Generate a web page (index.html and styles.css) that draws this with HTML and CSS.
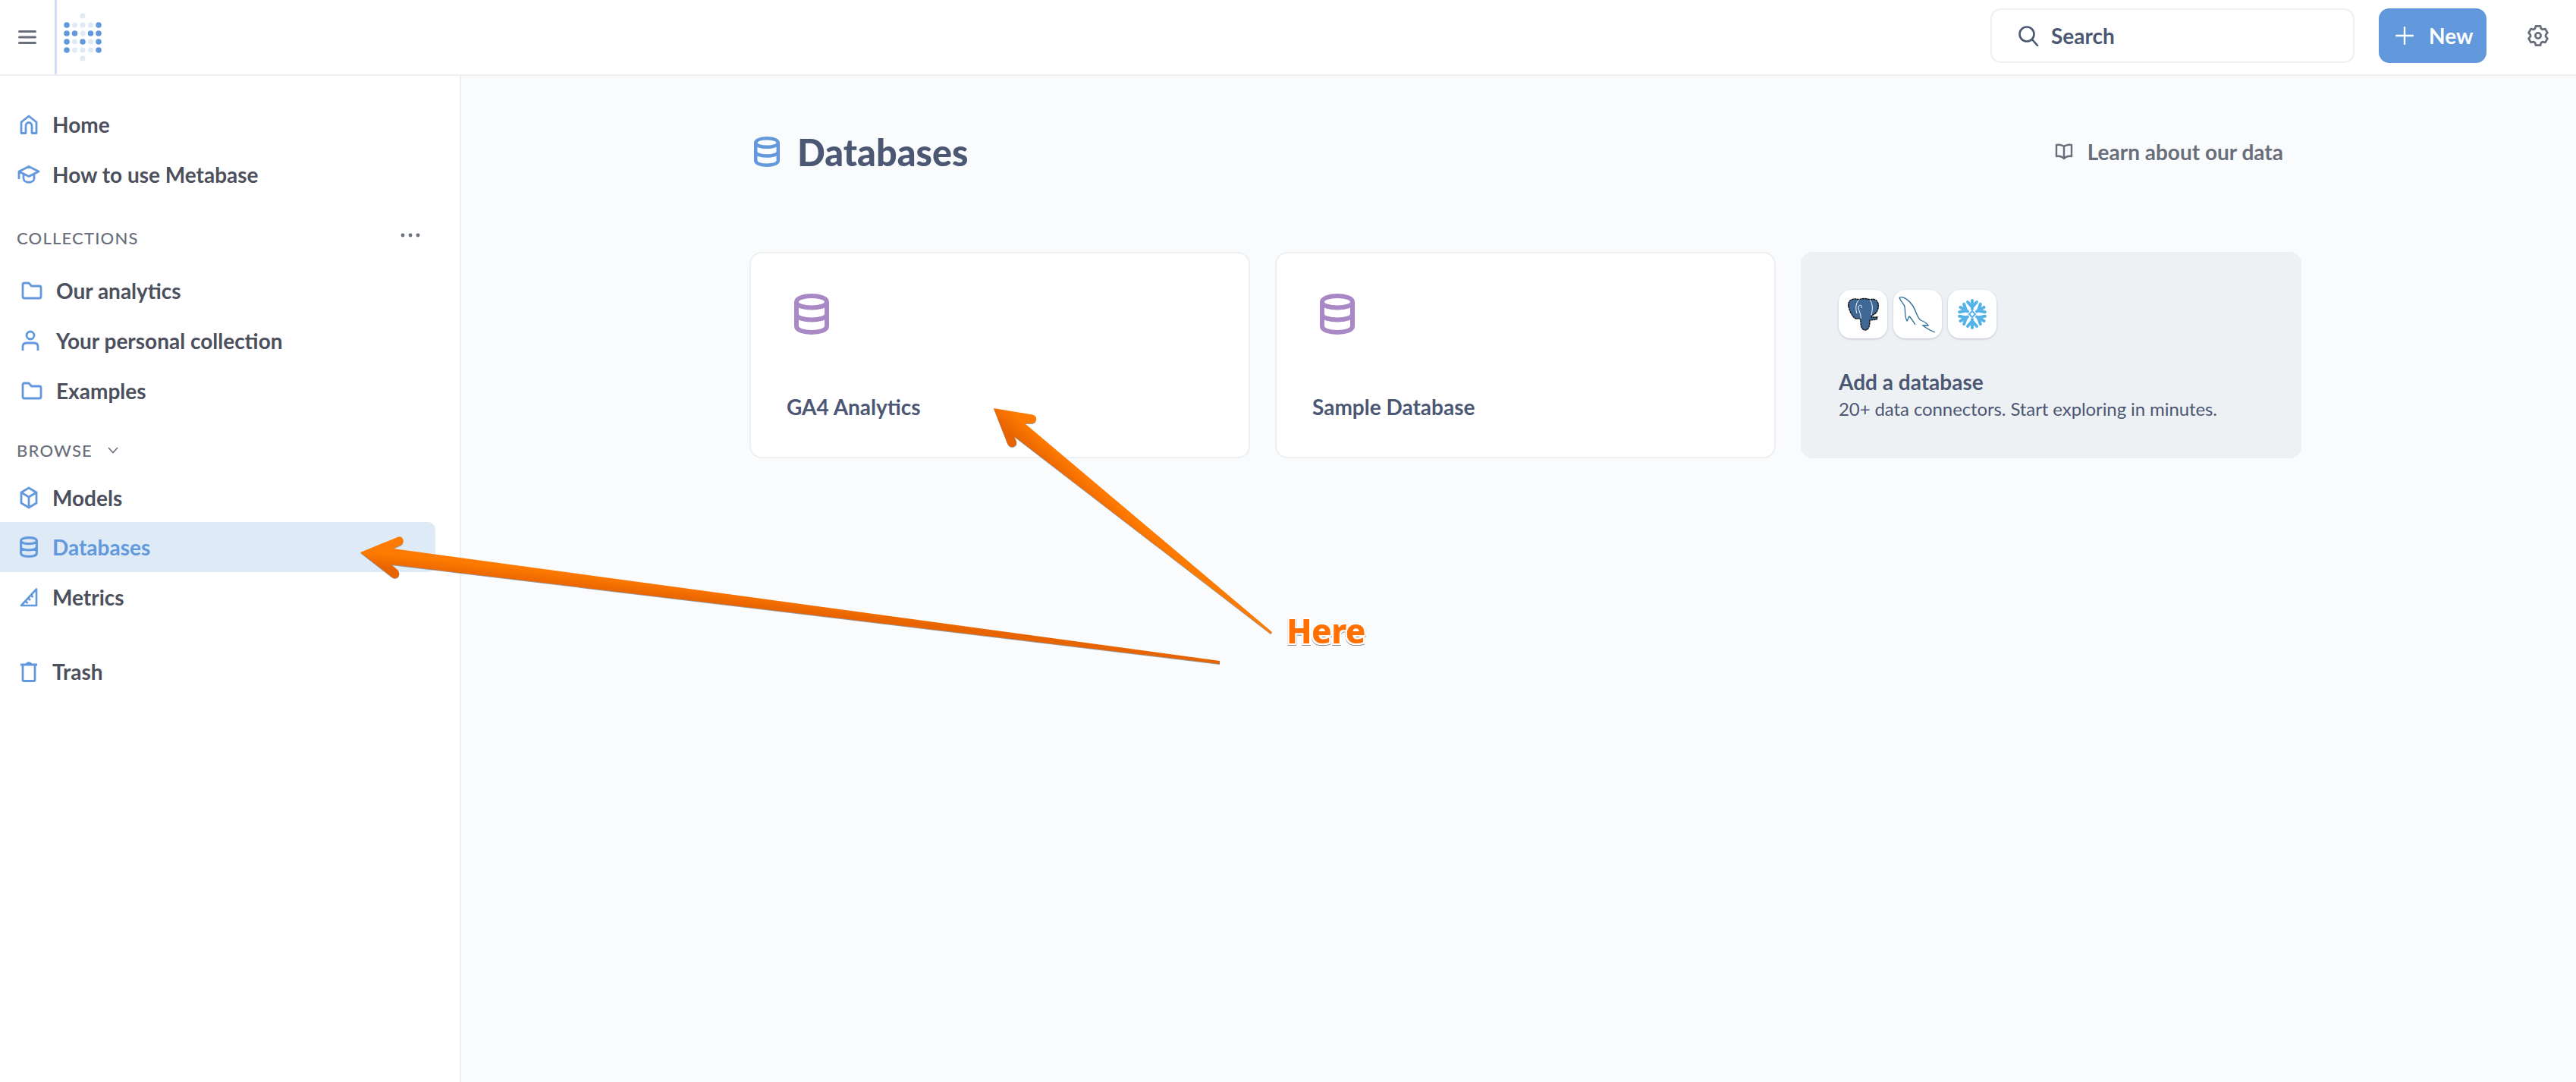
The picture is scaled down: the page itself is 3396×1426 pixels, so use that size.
FILE: index.html
```html
<!DOCTYPE html>
<html lang="en">
<head>
  <meta charset="UTF-8">
  <title>Databases</title>
  <link rel="stylesheet" href="styles.css">
</head>
<body>
  <svg class="sprite" width="0" height="0">
    <symbol id="i-db" viewBox="0.5 0.5 23 27">
      <path d="M2 6 C2 .7 22 .7 22 6 V22 C22 27.3 2 27.3 2 22 Z M2 6 C2 11 22 11 22 6 M2 14 C2 19 22 19 22 14" fill="none" stroke="currentColor" stroke-width="3" stroke-linejoin="round"/>
    </symbol>
    <symbol id="i-folder" viewBox="0 0 28 24">
      <path d="M2 4 Q2 2 4 2 H10 L13.5 6 H24 Q26 6 26 8 V20 Q26 22 24 22 H4 Q2 22 2 20 Z" fill="none" stroke="currentColor" stroke-width="2.8" stroke-linejoin="round"/>
    </symbol>
    <symbol id="i-flake-arm" viewBox="0 0 64 64">
      <path d="M32 25 V14 M26 16 L32 23 L38 16" fill="none" stroke="#56b3e8" stroke-width="4" stroke-linecap="round" stroke-linejoin="round"/>
    </symbol>
  </svg>

  <header class="topbar">
    <div class="topbar-left">
      <button class="menu-btn" aria-label="Menu">
        <svg width="24" height="20" viewBox="0 0 24 20"><path d="M1.5 2.5 H22.5 M1.5 10 H22.5 M1.5 17.5 H22.5" stroke="#696e7b" stroke-width="3" stroke-linecap="round"/></svg>
      </button>
      <svg class="logo" width="50" height="64" viewBox="0 0 50 64">
        <g fill="#dfeaf6">
          <circle cx="25" cy="4" r="3.5"/><circle cx="14.5" cy="16" r="3.5"/><circle cx="25" cy="16" r="3.5"/><circle cx="35.5" cy="16" r="3.5"/>
          <circle cx="25" cy="27" r="3.5"/><circle cx="14.5" cy="38" r="3.5"/><circle cx="35.5" cy="38" r="3.5"/><circle cx="14.5" cy="49" r="3.5"/>
          <circle cx="25" cy="49" r="3.5"/><circle cx="35.5" cy="49" r="3.5"/><circle cx="25" cy="60" r="3.5"/>
        </g>
        <g fill="#6298dc">
          <circle cx="4" cy="16" r="3.8"/><circle cx="46" cy="16" r="3.8"/><circle cx="4" cy="27" r="3.8"/><circle cx="14.5" cy="27" r="3.8"/>
          <circle cx="35.5" cy="27" r="3.8"/><circle cx="46" cy="27" r="3.8"/><circle cx="4" cy="38" r="3.8"/><circle cx="25" cy="38" r="3.8"/>
          <circle cx="46" cy="38" r="3.8"/><circle cx="4" cy="49" r="3.8"/><circle cx="46" cy="49" r="3.8"/>
        </g>
      </svg>
    </div>
    <div class="topbar-right">
      <div class="search">
        <svg width="28" height="28" viewBox="0 0 28 28"><circle cx="12" cy="12" r="9.5" fill="none" stroke="#4c5773" stroke-width="2.6"/><path d="M19 19 L26 27" stroke="#4c5773" stroke-width="2.6" stroke-linecap="round"/></svg>
        <span>Search</span>
      </div>
      <button class="new-btn">
        <svg width="24" height="24" viewBox="0 0 24 24"><path d="M12 1 V23 M1 12 H23" stroke="#fff" stroke-width="2.4" stroke-linecap="round"/></svg>
        New
      </button>
      <svg class="gear" width="28" height="28" viewBox="0 0 28 28">
        <path d="M11.1 1.3 H16.9 L18.2 4.9 L19.7 5.8 L23.5 5.1 L26.4 10.2 L24 13.1 V14.9 L26.4 17.8 L23.5 22.9 L19.7 22.2 L18.2 23.1 L16.9 26.7 H11.1 L9.8 23.1 L8.3 22.2 L4.5 22.9 L1.6 17.8 L4 14.9 V13.1 L1.6 10.2 L4.5 5.1 L8.3 5.8 L9.8 4.9 Z" fill="none" stroke="#696e7b" stroke-width="2.8" stroke-linejoin="round"/>
        <circle cx="14" cy="14" r="3.6" fill="none" stroke="#696e7b" stroke-width="2.8"/>
      </svg>
    </div>
  </header>

  <div class="layout">
    <aside class="sidebar">
      <a class="nav-item">
        <span class="nav-icon"><svg width="24" height="26" viewBox="0 0 24 26"><path d="M2 24.5 V10 L12 2 L22 10 V24.5 H16 V14.5 A4 4 0 0 0 8 14.5 V24.5 Z" fill="none" stroke="currentColor" stroke-width="2.8" stroke-linejoin="round"/></svg></span>
        Home
      </a>
      <a class="nav-item">
        <span class="nav-icon"><svg class="cap-icon" width="30" height="24" viewBox="0 0 30 24"><path d="M15 1.5 L28 8 L15 14.5 L2 8 Z M8 12 V17 C8 24 22 24 22 17 V12 M2 8 V18" fill="none" stroke="currentColor" stroke-width="2.8" stroke-linejoin="round"/></svg></span>
        How to use Metabase
      </a>

      <div class="nav-heading heading-collections">
        <span>COLLECTIONS</span>
        <svg class="more" width="26" height="6" viewBox="0 0 26 6"><circle cx="3" cy="3" r="2.4"/><circle cx="13" cy="3" r="2.4"/><circle cx="23" cy="3" r="2.4"/></svg>
      </div>
      <a class="nav-item nav-item-sub">
        <span class="nav-icon"><svg width="28" height="24"><use href="#i-folder"/></svg></span>
        Our analytics
      </a>
      <a class="nav-item nav-item-sub">
        <span class="nav-icon"><svg width="24" height="28" viewBox="0 0 24 28"><circle cx="12" cy="7" r="5" fill="none" stroke="currentColor" stroke-width="2.8"/><path d="M2 27 V22 Q2 17 7 17 H17 Q22 17 22 22 V27" fill="none" stroke="currentColor" stroke-width="2.8"/></svg></span>
        Your personal collection
      </a>
      <a class="nav-item nav-item-sub">
        <span class="nav-icon"><svg width="28" height="24"><use href="#i-folder"/></svg></span>
        Examples
      </a>

      <div class="nav-heading heading-browse">
        <span>BROWSE</span>
        <svg width="14" height="9" viewBox="0 0 14 9"><path d="M1 1 L7 7.5 L13 1" fill="none" stroke="#696e7b" stroke-width="1.6"/></svg>
      </div>
      <a class="nav-item">
        <span class="nav-icon"><svg width="24" height="30" viewBox="0 0 24 30"><path d="M12 2 L22 8 V22 L12 28 L2 22 V8 Z M2 8 L12 14 L22 8 M12 14 V28" fill="none" stroke="currentColor" stroke-width="2.8" stroke-linejoin="round"/></svg></span>
        Models
      </a>
      <a class="nav-item nav-item-active">
        <span class="nav-icon"><svg width="24" height="28"><use href="#i-db"/></svg></span>
        Databases
      </a>
      <a class="nav-item">
        <span class="nav-icon"><svg width="24" height="26" viewBox="0 0 24 26"><path d="M22 2.5 V24 H2 Z M11 14 L14 17 M14.5 10 L17.5 13 M7.5 18 L10.5 21" fill="none" stroke="currentColor" stroke-width="2.6" stroke-linejoin="round"/></svg></span>
        Metrics
      </a>
      <a class="nav-item nav-item-trash">
        <span class="nav-icon"><svg width="24" height="28" viewBox="0 0 24 28"><path d="M1 5 H23 M8.5 4.5 Q12 1 15.5 4.5 M4 5 V25 Q4 26.5 5.5 26.5 H18.5 Q20 26.5 20 25 V5" fill="none" stroke="currentColor" stroke-width="2.8"/></svg></span>
        Trash
      </a>
    </aside>

    <main class="content">
      <div class="page-head">
        <h1 class="page-title">
          <svg class="title-icon" width="34" height="40"><use href="#i-db"/></svg>
          Databases
        </h1>
        <a class="learn-link">
          <svg width="24" height="22" viewBox="0 0 24 22"><path d="M12 4 C9 1.5 5 1.5 2 2 V17 C5 16.5 9 16.5 12 20 C15 16.5 19 16.5 22 17 V2 C19 1.5 15 1.5 12 4 Z M12 4 V19" fill="none" stroke="#696e7b" stroke-width="2.4" stroke-linejoin="round"/></svg>
          Learn about our data
        </a>
      </div>

      <div class="card-grid">
        <div class="card">
          <svg class="card-icon" width="46" height="54"><use href="#i-db"/></svg>
          <div class="card-name">GA4 Analytics</div>
        </div>
        <div class="card">
          <svg class="card-icon" width="46" height="54"><use href="#i-db"/></svg>
          <div class="card-name">Sample Database</div>
        </div>
        <div class="card card-add">
          <div class="logo-row">
            <div class="logo-tile">
              <svg width="64" height="64" viewBox="0 0 64 64">
                <path d="M13 22 C11 14 19 10 27 13 C30 11 38 11 41 13 C48 10 54 16 52 24 C51 29 48 32 45 33 L43 36 L51 36 L50 39 L41 40 C41 46 40 53 35 53 C30 53 29 47 29 42 L28 37 C22 40 19 36 17 32 C15 29 14 26 13 22 Z" fill="#3f6896" stroke="#111" stroke-width="1.4" stroke-dasharray="3 .6"/>
                <path d="M27 13 C22 17 22 26 24 31 M41 13 C45 18 45 26 43 33 M30 24 C32 20 28 19 26 22 C26 28 30 32 29 38" fill="none" stroke="#fff" stroke-width="1"/>
              </svg>
            </div>
            <div class="logo-tile">
              <svg width="64" height="64" viewBox="0 0 64 64">
                <path d="M8 10 C13 8 20 13 25 20 C30 27 31 36 36 40 C41 42 45 45 46 47 L39 47 C43 50 47 53 55 56 M8 10 C9 15 14 18 15 22 C16 30 15 36 18 41 C20 38 20 36 21 35 C24 38 26 41 29 46" fill="none" stroke="#2a6a94" stroke-width="1.3"/>
              </svg>
            </div>
            <div class="logo-tile">
              <svg width="64" height="64" viewBox="0 0 64 64">
                <use href="#i-flake-arm"/>
                <use href="#i-flake-arm" transform="rotate(60 32 32)"/>
                <use href="#i-flake-arm" transform="rotate(120 32 32)"/>
                <use href="#i-flake-arm" transform="rotate(180 32 32)"/>
                <use href="#i-flake-arm" transform="rotate(240 32 32)"/>
                <use href="#i-flake-arm" transform="rotate(300 32 32)"/>
                <path d="M32 28 L36 32 L32 36 L28 32 Z" fill="none" stroke="#56b3e8" stroke-width="2"/>
              </svg>
            </div>
          </div>
          <div class="add-title">Add a database</div>
          <div class="add-text">20+ data connectors. Start exploring in minutes.</div>
        </div>
      </div>
    </main>
  </div>

  <!-- annotations drawn over the screenshot -->
  <svg class="annotations" width="3396" height="1426" viewBox="0 0 3396 1426">
    <defs>
      <linearGradient id="arrow-fill" gradientUnits="userSpaceOnUse" x1="1336" y1="575" x2="1351" y2="558">
        <stop offset="0" stop-color="#e86400"/>
        <stop offset="1" stop-color="#ff7a00"/>
      </linearGradient>
      <linearGradient id="arrow-fill-2" gradientUnits="userSpaceOnUse" x1="1062" y1="807" x2="1064" y2="788">
        <stop offset="0" stop-color="#e86400"/>
        <stop offset="1" stop-color="#ff7a00"/>
      </linearGradient>
    </defs>
    <path class="arrow" fill="url(#arrow-fill)" d="M1310 538 L1361 546.5 Q1367 548 1366 553 Q1365 558 1359 558 L1351 558 L1677 833 L1675 835 L1337 575 L1340 582 Q1341 588 1335 589 Q1330 589 1328 584 Z"/>
    <path class="arrow" fill="url(#arrow-fill-2)" d="M475 728 L524 708 Q529 706 531 710 Q533 715 529 718 L518 723 L1608 871 L1608 875 L516 744 L524 751 Q528 755 525 760 Q521 764 516 760 Z"/>
  </svg>
  <div class="here-label">Here</div>
</body>
</html>
```

FILE: styles.css
```css
* {
  box-sizing: border-box;
}

html, body {
  height: 100%;
}

body {
  margin: 0;
  font-family: Lato, "Open Sans", sans-serif;
  color: #4c5773;
  background: #f9fbfc;
  overflow: hidden;
  position: relative;
}

.sprite {
  position: absolute;
}

/* top bar */
.topbar {
  height: 100px;
  background: #fff;
  border-bottom: 2px solid #eeeff1;
  display: flex;
  justify-content: space-between;
  align-items: center;
}

.topbar-left {
  display: flex;
  align-items: center;
  height: 98px;
}

.menu-btn {
  width: 75px;
  height: 98px;
  padding: 0 0 0 24px;
  display: flex;
  align-items: center;
  background: none;
  border: none;
  border-right: 3px solid #cfe0f4;
}

.logo {
  margin-left: 9px;
}

.topbar-right {
  display: flex;
  align-items: center;
  padding: 0 36px 4px 0;
}

.search {
  width: 480px;
  height: 72px;
  display: flex;
  align-items: center;
  gap: 16px;
  padding-left: 34px;
  background: #fff;
  border: 2px solid #eeeff1;
  border-radius: 14px;
  font-size: 28px;
  font-weight: 700;
}

.new-btn {
  width: 142px;
  height: 72px;
  margin-left: 32px;
  display: flex;
  align-items: center;
  gap: 20px;
  padding: 0 0 0 22px;
  color: #fff;
  background: #6298dc;
  border: none;
  border-radius: 14px;
  font-family: inherit;
  font-size: 28px;
  font-weight: 700;
}

.gear {
  margin-left: 54px;
}

/* sidebar */
.layout {
  display: flex;
  height: calc(100% - 100px);
}

.sidebar {
  width: 608px;
  flex: none;
  padding: 31px 32px 0 0;
  background: #fff;
  border-right: 2px solid #eeeff1;
}

.nav-item {
  height: 66px;
  display: flex;
  align-items: center;
  padding-left: 26px;
  color: #4c4f5c;
  font-size: 28px;
  font-weight: 700;
}

.nav-icon {
  width: 43px;
  display: flex;
  align-items: center;
  color: #6298dc;
}

.cap-icon {
  margin-left: -3px;
}

.nav-item-sub {
  padding-left: 28px;
}

.nav-item-sub .nav-icon {
  width: 46px;
}

.nav-item-active {
  margin-top: -1px;
  color: #6298dc;
  background: #deeaf6;
  border-radius: 0 10px 10px 0;
}

.nav-item-trash {
  margin-top: 32px;
}

.nav-heading {
  display: flex;
  align-items: center;
  padding-left: 22px;
  color: #696e7b;
  font-size: 22px;
  font-weight: 500;
  letter-spacing: 1.2px;
}

.heading-collections {
  height: 87px;
  justify-content: space-between;
  padding: 14px 20px 0 22px;
}

.more {
  fill: #696e7b;
  margin-bottom: 8px;
}

.heading-browse {
  height: 75px;
  gap: 20px;
  padding-top: 15px;
}

/* main */
.content {
  flex: 1;
  padding: 0 362px 0 380px;
}

.page-head {
  height: 232px;
  padding: 0 24px 32px 6px;
  display: flex;
  justify-content: space-between;
  align-items: center;
}

.page-title {
  margin: 0;
  display: flex;
  align-items: center;
  gap: 23px;
  font-size: 48.5px;
  font-weight: 900;
}

.title-icon {
  flex: none;
  color: #6298dc;
}

.learn-link {
  display: flex;
  align-items: center;
  gap: 19px;
  color: #696e7b;
  font-size: 28px;
  font-weight: 700;
}

.card-grid {
  display: grid;
  grid-template-columns: repeat(3, 1fr);
  gap: 33px;
}

.card {
  height: 272px;
  display: flex;
  flex-direction: column;
  padding: 53px 47px 0;
  background: #fff;
  border: 2px solid #eeeff1;
  border-radius: 16px;
}

.card-icon {
  flex: none;
  margin-left: 10px;
  color: #a989c5;
}

.card-name {
  margin-top: 78px;
  font-size: 28px;
  font-weight: 700;
}

.card-add {
  padding: 48px 48px 0;
  background: #eef1f4;
}

.logo-row {
  display: flex;
  gap: 8px;
}

.logo-tile {
  width: 64px;
  height: 64px;
  background: #fff;
  border-radius: 16px;
  box-shadow: 0 1px 3px rgba(76, 87, 115, 0.3);
}

.add-title {
  margin-top: 40px;
  font-size: 28px;
  font-weight: 700;
}

.add-text {
  margin-top: 4px;
  font-size: 24px;
  letter-spacing: -0.1px;
}

/* overlay */
.annotations {
  position: absolute;
  top: 0;
  left: 0;
  pointer-events: none;
}

.arrow {
  filter: drop-shadow(0 1px 0 rgba(70, 70, 80, 0.55));
}

.here-label {
  position: absolute;
  left: 1696px;
  top: 801px;
  color: #ff7000;
  font-family: "Noto Sans", sans-serif;
  font-size: 44px;
  font-weight: 800;
  letter-spacing: -0.6px;
  filter: drop-shadow(2px 0 0 #fff) drop-shadow(-2px 0 0 #fff) drop-shadow(0 2px 0 #fff) drop-shadow(0 -2px 0 #fff) drop-shadow(0 1px 0 rgba(90, 90, 90, 0.7));
}
```
